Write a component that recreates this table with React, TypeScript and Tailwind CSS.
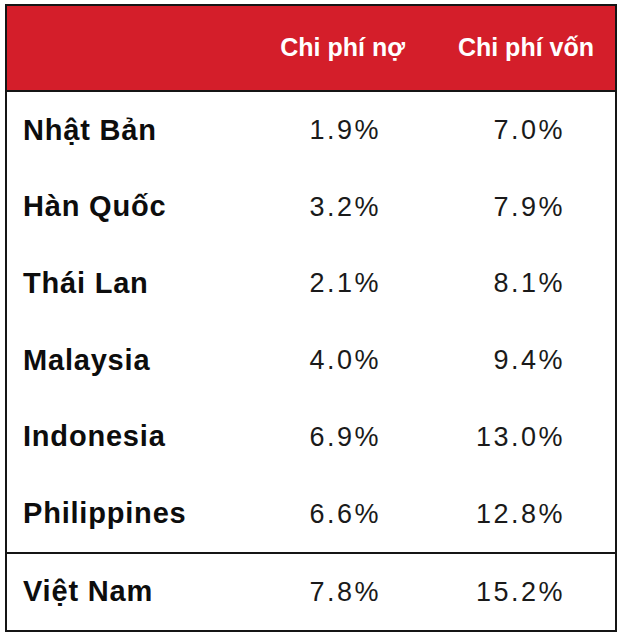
const rows: { name: string; debt: string; equity: string }[] = [
  { name: 'Nhật Bản', debt: '1.9%', equity: '7.0%' },
  { name: 'Hàn Quốc', debt: '3.2%', equity: '7.9%' },
  { name: 'Thái Lan', debt: '2.1%', equity: '8.1%' },
  { name: 'Malaysia', debt: '4.0%', equity: '9.4%' },
  { name: 'Indonesia', debt: '6.9%', equity: '13.0%' },
  { name: 'Philippines', debt: '6.6%', equity: '12.8%' },
];

const cols = 'grid grid-cols-[263px_160px_185px]';

function Row({ name, debt, equity, last }: { name: string; debt: string; equity: string; last?: boolean }) {
  return (
    <div className={`${cols} items-center ${last ? 'h-[76px]' : 'h-[76.7px]'}`}>
      <div className="pl-4 text-[29px] font-bold tracking-[0.8px] text-[#0d0d0d]">{name}</div>
      <div className="pr-[49px] text-right text-[27px] tracking-[2.5px] text-[#1a1a1a]">{debt}</div>
      <div className="pr-[50px] text-right text-[27px] tracking-[2.5px] text-[#1a1a1a]">{equity}</div>
    </div>
  );
}

export default function App() {
  return (
    <div className="h-[634px] w-[622px] bg-white pl-[5px] pt-[4px] font-['Liberation_Sans',Arial,sans-serif]">
      <div className="w-[612px] border-2 border-[#151515]">
        <div className={`${cols} h-[86px] items-center border-b-2 border-[#151515] bg-[#d41e2a] text-white`}>
          <div />
          <div className="pr-[25px] text-right text-[25px] font-bold">Chi phí nợ</div>
          <div className="pr-[21px] text-right text-[25px] font-bold">Chi phí vốn</div>
        </div>
        {rows.map((r) => (
          <Row key={r.name} {...r} />
        ))}
        <div className="border-t-2 border-[#151515]">
          <Row name="Việt Nam" debt="7.8%" equity="15.2%" last />
        </div>
      </div>
    </div>
  );
}
